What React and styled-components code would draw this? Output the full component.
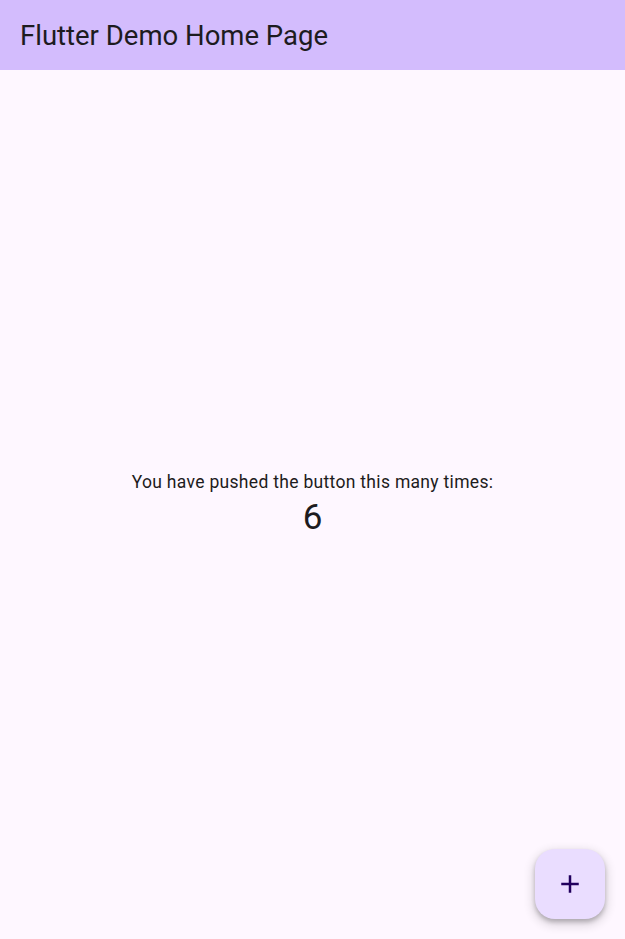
import styled, { createGlobalStyle } from 'styled-components';

const GlobalStyle = createGlobalStyle`
  html, body {
    margin: 0;
    padding: 0;
    background-color: #fef7ff;
  }
  body {
    font-family: Roboto, "Noto Sans", sans-serif;
    color: #1d1b20;
  }
`;

const Page = styled.div`
  display: flex;
  flex-direction: column;
  width: 100%;
  height: 939px;
  background-color: #fef7ff;
  position: relative;
  overflow: hidden;
`;

const AppBar = styled.header`
  display: flex;
  align-items: center;
  height: 70px;
  padding: 0 20px;
  background-color: #d3bcfd;
  flex-shrink: 0;
`;

const Title = styled.h1`
  margin: 0;
  font-size: 27.5px;
  font-weight: 400;
  line-height: 35px;
  color: #1d1b20;
`;

const Body = styled.main`
  flex: 1;
  display: flex;
  flex-direction: column;
  align-items: center;
  justify-content: center;
`;

const Label = styled.div`
  font-size: 17.5px;
  line-height: 25px;
  letter-spacing: 0.31px;
  color: #1d1b20;
`;

const Counter = styled.div`
  font-size: 35px;
  line-height: 45px;
  color: #1d1b20;
`;

const Fab = styled.button`
  position: absolute;
  right: 20px;
  bottom: 20px;
  width: 70px;
  height: 70px;
  border: none;
  border-radius: 20px;
  background-color: #eaddff;
  color: #21005d;
  display: flex;
  align-items: center;
  justify-content: center;
  padding: 0;
  cursor: pointer;
  box-shadow: 0 3px 4px rgba(0, 0, 0, 0.22), 0 4px 10px 3px rgba(0, 0, 0, 0.12);
`;

const AddIcon = () => (
  <svg width="30" height="30" viewBox="0 0 24 24" fill="currentColor">
    <path d="M19 13h-6v6h-2v-6H5v-2h6V5h2v6h6v2z" />
  </svg>
);

const App = () => {
  return (
    <>
      <GlobalStyle />
      <Page>
        <AppBar>
          <Title>Flutter Demo Home Page</Title>
        </AppBar>
        <Body>
          <Label>You have pushed the button this many times:</Label>
          <Counter>6</Counter>
        </Body>
        <Fab aria-label="Increment">
          <AddIcon />
        </Fab>
      </Page>
    </>
  );
};

export default App;
